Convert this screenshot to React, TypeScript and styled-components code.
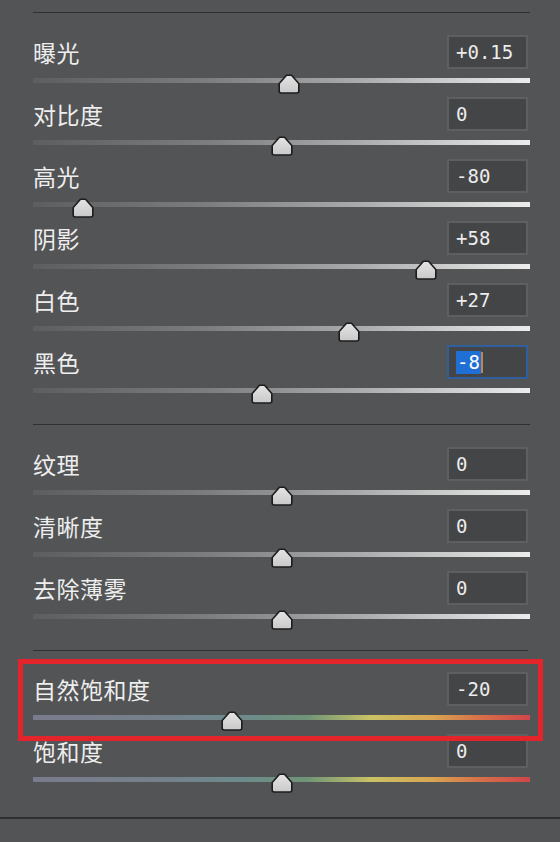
import styled, { createGlobalStyle, css } from "styled-components";

type Slider = {
  label: string;
  text: string;
  value: number;
  min: number;
  max: number;
  color?: boolean;
  focused?: boolean;
  highlight?: boolean;
};

const groups: Slider[][] = [
  [
    { label: "曝光", text: "+0.15", value: 0.15, min: -5, max: 5 },
    { label: "对比度", text: "0", value: 0, min: -100, max: 100 },
    { label: "高光", text: "-80", value: -80, min: -100, max: 100 },
    { label: "阴影", text: "+58", value: 58, min: -100, max: 100 },
    { label: "白色", text: "+27", value: 27, min: -100, max: 100 },
    { label: "黑色", text: "-8", value: -8, min: -100, max: 100, focused: true },
  ],
  [
    { label: "纹理", text: "0", value: 0, min: -100, max: 100 },
    { label: "清晰度", text: "0", value: 0, min: -100, max: 100 },
    { label: "去除薄雾", text: "0", value: 0, min: -100, max: 100 },
  ],
  [
    { label: "自然饱和度", text: "-20", value: -20, min: -100, max: 100, color: true, highlight: true },
    { label: "饱和度", text: "0", value: 0, min: -100, max: 100, color: true },
  ],
];

const Thumb = () => (
  <svg width="22" height="20" viewBox="0 0 22 20">
    <defs>
      <linearGradient id="tg" x1="0" y1="0" x2="0" y2="1">
        <stop offset="0" stopColor="#e4e4e4" />
        <stop offset="1" stopColor="#c9c9c9" />
      </linearGradient>
    </defs>
    <path
      d="M8.5 1.2 L13.5 1.2 L20.8 9.5 L20.8 17 Q20.8 19 18.8 19 L3.2 19 Q1.2 19 1.2 17 L1.2 9.5 Z"
      fill="url(#tg)"
      stroke="#1c1c1d"
      strokeWidth="1.6"
      strokeLinejoin="round"
    />
  </svg>
);

const App = () => {
  return (
    <Panel>
      <GlobalStyle />
      {groups.map((group, gi) => (
        <Group key={gi} $last={gi === groups.length - 1}>
          {group.map((s) => {
            const pct = ((s.value - s.min) / (s.max - s.min)) * 100;
            return (
              <Row key={s.label} $highlight={s.highlight}>
                <Header>
                  <Label>{s.label}</Label>
                  <ValueBox $focused={s.focused}>
                    {s.focused ? (
                      <>
                        <Selected>{s.text}</Selected>
                        <Caret />
                      </>
                    ) : (
                      s.text
                    )}
                  </ValueBox>
                </Header>
                <TrackWrap>
                  <Track $color={s.color} />
                  <ThumbHolder style={{ left: `${pct}%` }}>
                    <Thumb />
                  </ThumbHolder>
                </TrackWrap>
              </Row>
            );
          })}
        </Group>
      ))}
    </Panel>
  );
};

const GlobalStyle = createGlobalStyle`
  html, body {
    margin: 0;
    padding: 0;
    background: #535456;
  }
  body {
    font-family: "Noto Sans CJK SC", "Noto Sans", sans-serif;
  }
`;

const Panel = styled.div`
  width: 560px;
  height: 842px;
  box-sizing: border-box;
  padding: 12px 30px 0 33px;
  background: #535456;
  overflow: hidden;
`;

const Group = styled.section<{ $last?: boolean }>`
  border-top: 1px solid #2f3032;
  padding: 22px 0 ${(p) => (p.$last ? "21px" : "17px")};

  ${(p) =>
    p.$last &&
    css`
      border-bottom: 2px solid #2f3032;
      margin-left: -33px;
      margin-right: -30px;
      padding-left: 33px;
      padding-right: 30px;
      border-top: none;
      position: relative;

      &::before {
        content: "";
        position: absolute;
        top: 0;
        left: 33px;
        right: 32px;
        height: 1px;
        background: #2f3032;
      }
    `}
`;

const Row = styled.div<{ $highlight?: boolean }>`
  position: relative;
  height: 62px;

  ${(p) =>
    p.$highlight &&
    css`
      &::after {
        content: "";
        position: absolute;
        left: -15px;
        right: -13px;
        top: -13px;
        height: 82px;
        box-sizing: border-box;
        border: 5px solid #e3242b;
        pointer-events: none;
        z-index: 3;
      }
    `}
`;

const Header = styled.div`
  display: flex;
  align-items: center;
  justify-content: space-between;
  height: 34px;
`;

const Label = styled.span`
  font-size: 23px;
  line-height: 1;
  color: #eeeeee;
  letter-spacing: 0.5px;
`;

const ValueBox = styled.div<{ $focused?: boolean }>`
  width: 81px;
  height: 34px;
  margin-right: 2px;
  box-sizing: border-box;
  display: flex;
  align-items: center;
  padding-left: 7px;
  background: #444547;
  border: 2px solid ${(p) => (p.$focused ? "#2f5f9c" : "#5e5f61")};
  color: #ececec;
  font-family: "DejaVu Sans Mono", "Liberation Mono", monospace;
  font-size: 19px;
  position: relative;
  z-index: 1;
`;

const Selected = styled.span`
  background: #1f6fd4;
  color: #ffffff;
  padding: 1px 1px;
  line-height: 21px;
`;

const Caret = styled.span`
  width: 2px;
  height: 21px;
  background: #c8834c;
`;

const TrackWrap = styled.div`
  position: relative;
  margin-top: 9px;
  height: 5px;
`;

const Track = styled.div<{ $color?: boolean }>`
  height: 5px;
  background: ${(p) =>
    p.$color
      ? "linear-gradient(to right, #7a7b8c 0%, #75808c 25%, #6d8a8c 42%, #6f9478 55%, #c9c265 68%, #d9a652 80%, #d6704a 90%, #d0454a 100%)"
      : "linear-gradient(to right, #5d5e60 0%, #7c7d7f 35%, #a9aaab 65%, #ececec 100%)"};
`;

const ThumbHolder = styled.div`
  position: absolute;
  top: -4px;
  width: 22px;
  height: 20px;
  transform: translateX(-50%);
  z-index: 2;

  svg {
    display: block;
  }
`;

export default App;
